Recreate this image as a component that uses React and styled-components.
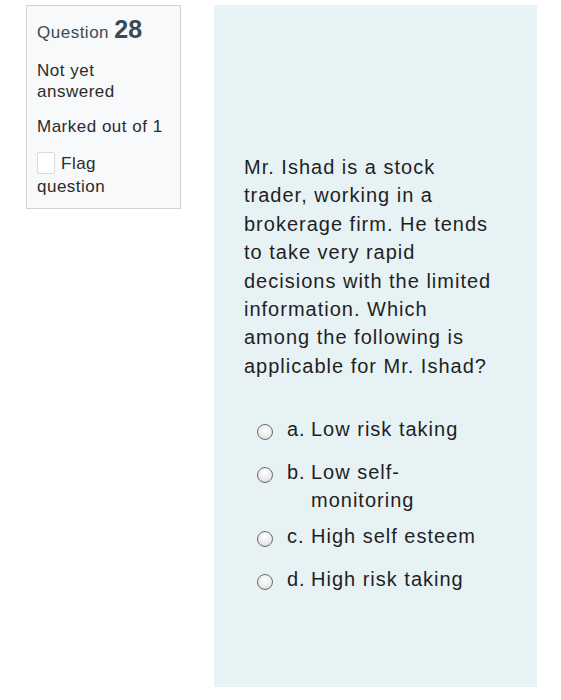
import React from "react";
import styled, { createGlobalStyle } from "styled-components";

const GlobalStyle = createGlobalStyle`
  html, body {
    margin: 0;
    padding: 0;
    background: #fff;
  }
  body {
    font-family: "Liberation Sans", Arial, sans-serif;
  }
`;

const Page = styled.div`
  display: flex;
  align-items: flex-start;
  gap: 33px;
  padding: 5px 0 0 26px;
  width: 561px;
  height: 700px;
  box-sizing: border-box;
`;

const Info = styled.div`
  width: 155px;
  box-sizing: border-box;
  padding: 9px 10px 10px 10px;
  background: #f8f9fa;
  border: 1px solid #cfd3d5;
  color: #2b2b2b;
  font-size: 17px;
  letter-spacing: 0.5px;
  line-height: 21px;
`;

const QNo = styled.h3`
  margin: 0 0 13px 0;
  font-size: 17px;
  font-weight: 400;
  color: #3b4a52;
  line-height: 28px;
`;

const Num = styled.span`
  font-size: 25px;
  font-weight: 700;
  letter-spacing: 0;
`;

const InfoLine = styled.div`
  margin-bottom: 14px;
`;

const Flag = styled.div`
  margin-top: 15px;
  line-height: 23px;
`;

const Box = styled.span`
  display: inline-block;
  width: 18px;
  height: 22px;
  box-sizing: border-box;
  border: 1px solid #dadada;
  border-radius: 2px;
  background: #fff;
  vertical-align: -5px;
  margin-right: 6px;
`;

const Content = styled.div`
  width: 323px;
  height: 682px;
  box-sizing: border-box;
  padding: 148px 40px 0 30px;
  background: #e7f2f5;
  color: #1f1f1f;
  font-size: 20px;
  letter-spacing: 1px;
`;

const QText = styled.p`
  margin: 0 0 35px 0;
  line-height: 28.4px;
`;

const Options = styled.div`
  display: flex;
  flex-direction: column;
  padding-left: 13px;
`;

const Option = styled.label`
  display: flex;
  align-items: flex-start;
  min-height: 35px;
  padding-bottom: 8px;
  line-height: 28px;
  white-space: nowrap;
`;

const Radio = styled.span`
  flex: none;
  width: 16px;
  height: 16px;
  margin-top: 9px;
  margin-right: 14px;
  box-sizing: border-box;
  border-radius: 50%;
  border: 1px solid #6b6b6b;
  background: radial-gradient(circle at 50% 35%, #ffffff 0%, #ececec 55%, #cfcfcf 100%);
`;

const Letter = styled.span`
  flex: none;
  width: 24px;
`;

const Label = styled.span`
  flex: 1;
`;

const opts = [
  ["a.", "Low risk taking"],
  ["b.", "Low self-monitoring"],
  ["c.", "High self esteem"],
  ["d.", "High risk taking"],
];

export default function App() {
  return (
    <>
      <GlobalStyle />
      <Page>
        <Info>
          <QNo>
            Question <Num>28</Num>
          </QNo>
          <InfoLine>
            Not yet
            <br />
            answered
          </InfoLine>
          <InfoLine>Marked out of 1</InfoLine>
          <Flag>
            <Box />
            Flag
            <br />
            question
          </Flag>
        </Info>
        <Content>
          <QText>
            Mr. Ishad is a stock trader, working in a brokerage firm. He tends
            to take very rapid decisions with the limited information. Which
            among the following is applicable for Mr. Ishad?
          </QText>
          <Options>
            {opts.map(([l, t]) => (
              <Option key={l}>
                <Radio />
                <Letter>{l}</Letter>
                <Label>{t === "Low self-monitoring" ? <>Low self-<br />monitoring</> : t}</Label>
              </Option>
            ))}
          </Options>
        </Content>
      </Page>
    </>
  );
}
